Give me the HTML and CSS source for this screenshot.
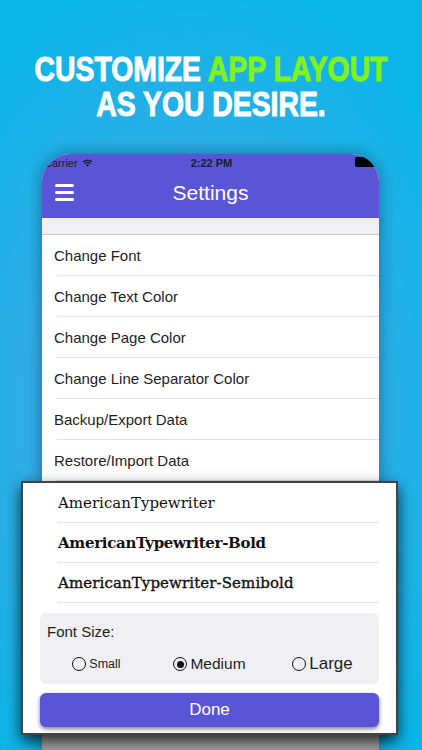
FILE: index.html
```html
<!DOCTYPE html>
<html>
<head>
<meta charset="utf-8">
<link rel="stylesheet" href="styles.css">
</head>
<body>
  <h1 class="headline">
    <span class="line">CUSTOMIZE <span class="accent">APP LAYOUT</span></span>
    <span class="line">AS YOU DESIRE.</span>
  </h1>

  <div class="phone">
    <div class="nav">
      <div class="status">
        <div class="status-left">Carrier
          <svg class="wifi" width="11" height="8" viewBox="0 0 11 8">
            <path d="M5.5 7.8 L3.9 6.1 A2.3 2.3 0 0 1 7.1 6.1 Z" fill="#1c1c2e"/>
            <path d="M2.6 4.7 A4 4 0 0 1 8.4 4.7" fill="none" stroke="#1c1c2e" stroke-width="1.3"/>
            <path d="M1 3 A6.3 6.3 0 0 1 10 3" fill="none" stroke="#1c1c2e" stroke-width="1.3"/>
          </svg>
        </div>
        <div class="time">2:22 PM</div>
        <div class="status-right">
          <svg width="24" height="11" viewBox="0 0 24 11"><rect x="0" y="0" width="22" height="10" rx="2" fill="#000"/><rect x="22" y="3" width="2" height="4" fill="#000"/></svg>
        </div>
      </div>
      <div class="titlebar">
        <div class="menu">
          <svg width="19" height="17" viewBox="0 0 19 17">
            <rect x="0" y="0" width="19" height="3" rx="1.5" fill="#fff"/>
            <rect x="0" y="7" width="19" height="3" rx="1.5" fill="#fff"/>
            <rect x="0" y="14" width="19" height="3" rx="1.5" fill="#fff"/>
          </svg>
        </div>
        <div class="title">Settings</div>
        <div></div>
      </div>
    </div>
    <div class="band"></div>
    <div class="list">
      <div class="row"><span>Change Font</span></div>
      <div class="row"><span>Change Text Color</span></div>
      <div class="row"><span>Change Page Color</span></div>
      <div class="row"><span>Change Line Separator Color</span></div>
      <div class="row"><span>Backup/Export Data</span></div>
      <div class="row"><span>Restore/Import Data</span></div>
    </div>
    <div class="dim"></div>
  </div>

  <div class="popup">
    <div class="fonts">
      <div class="font-item">AmericanTypewriter</div>
      <div class="font-item bold">AmericanTypewriter-Bold</div>
      <div class="font-item semi">AmericanTypewriter-Semibold</div>
    </div>
    <div class="size-box">
      <div class="size-label">Font Size:</div>
      <div class="radios">
        <div class="radio small"><span class="circle"></span>Small</div>
        <div class="radio medium"><span class="circle on"></span>Medium</div>
        <div class="radio large"><span class="circle"></span>Large</div>
      </div>
    </div>
    <div class="done">Done</div>
  </div>
</body>
</html>
```

FILE: styles.css
```css
* { box-sizing: border-box; }

html, body { margin: 0; padding: 0; }

body {
  position: relative;
  width: 422px;
  height: 750px;
  overflow: hidden;
  display: flex;
  flex-direction: column;
  font-family: "Liberation Sans", Arial, sans-serif;
  background: radial-gradient(ellipse 75% 60% at 45% 55%, #52b6ec 0%, #35ace6 45%, #0ab6e8 100%);
}

.headline {
  margin: 0;
  padding-top: 51px;
  text-align: center;
  font-family: "Liberation Sans", Arial, sans-serif;
  font-weight: 700;
  font-size: 35px;
  line-height: 35px;
  color: #fff;
  -webkit-text-stroke: 1px #fff;
  white-space: nowrap;
}

.headline .line {
  display: block;
  margin: 0 -60px;
  transform: scaleX(0.81);
  transform-origin: 50% 50%;
}

.headline .accent {
  color: #80f21a;
  -webkit-text-stroke: 1px #80f21a;
}

.phone {
  flex: 1;
  margin: 33px 43px 0 42px;
  border-radius: 28px 28px 0 0;
  overflow: hidden;
  background: #fff;
  display: flex;
  flex-direction: column;
  box-shadow: 0 0 16px rgba(0, 10, 40, 0.4);
}

.nav {
  background: #5a55d6;
  height: 64px;
}

.status {
  height: 16px;
  display: grid;
  grid-template-columns: 1fr auto 1fr;
  align-items: start;
  padding: 3px 0 0 2px;
  font-size: 11px;
  line-height: 12px;
  color: #1c1c2e;
}

.status-left {
  display: flex;
  align-items: center;
  gap: 4px;
}

.time {
  font-weight: 700;
}

.status-right {
  display: flex;
  justify-content: flex-end;
}

.titlebar {
  height: 48px;
  display: grid;
  grid-template-columns: 1fr auto 1fr;
  align-items: center;
}

.menu {
  padding-left: 13px;
  display: flex;
  padding-bottom: 4px;
}

.title {
  color: #fff;
  font-size: 21px;
  padding-bottom: 2px;
}

.band {
  height: 17px;
  background: #efeff4;
  border-bottom: 1px solid #c8c7cc;
}

.row {
  height: 41px;
  margin-left: 15px;
  border-bottom: 1px solid #e2e2e6;
  display: flex;
  align-items: center;
  font-size: 15px;
  color: #1e1e1e;
}

.row span {
  margin-left: -3px;
}

.dim {
  flex: 1;
  background: #a2a2a2;
}

.popup {
  position: absolute;
  left: 21px;
  top: 481px;
  width: 377px;
  background: #fff;
  border: 2px solid #3e4348;
  padding: 0 17px 6px 17px;
  box-shadow: 0 6px 14px rgba(0, 0, 0, 0.75);
}

.fonts {
  margin-left: 18px;
}

.font-item {
  height: 40px;
  border-bottom: 1px solid #e4e4e8;
  display: flex;
  align-items: center;
  font-family: "DejaVu Serif", "Liberation Serif", serif;
  font-size: 15px;
  color: #111;
}

.font-item.bold {
  font-weight: 700;
  letter-spacing: -0.3px;
}

.font-item.semi {
  -webkit-text-stroke: 0.35px #111;
  letter-spacing: 0.1px;
}

.size-box {
  margin-top: 10px;
  height: 71px;
  background: #efeff4;
  border-radius: 6px;
  padding: 10px 0 0 7px;
}

.size-label {
  font-size: 15px;
  line-height: 18px;
  color: #1e1e1e;
}

.radios {
  margin-top: 13px;
  height: 20px;
  display: grid;
  grid-template-columns: 1fr 1fr 1fr;
  margin-left: -7px;
}

.radio {
  display: flex;
  align-items: center;
  justify-content: center;
  gap: 3px;
  color: #1e1e1e;
}

.radio.small { font-size: 12.5px; }
.radio.medium { font-size: 15.5px; }
.radio.large { font-size: 17px; }

.circle {
  width: 14px;
  height: 14px;
  border: 1.8px solid #111;
  border-radius: 50%;
  display: flex;
  align-items: center;
  justify-content: center;
}

.circle.on::before {
  content: "";
  width: 7px;
  height: 7px;
  border-radius: 50%;
  background: #111;
}

.done {
  margin-top: 9px;
  height: 34px;
  background: #5a55d6;
  border-radius: 6px;
  display: flex;
  align-items: center;
  justify-content: center;
  color: #fff;
  font-size: 17px;
  box-shadow: 0 2px 4px rgba(0, 0, 0, 0.5);
}
```
